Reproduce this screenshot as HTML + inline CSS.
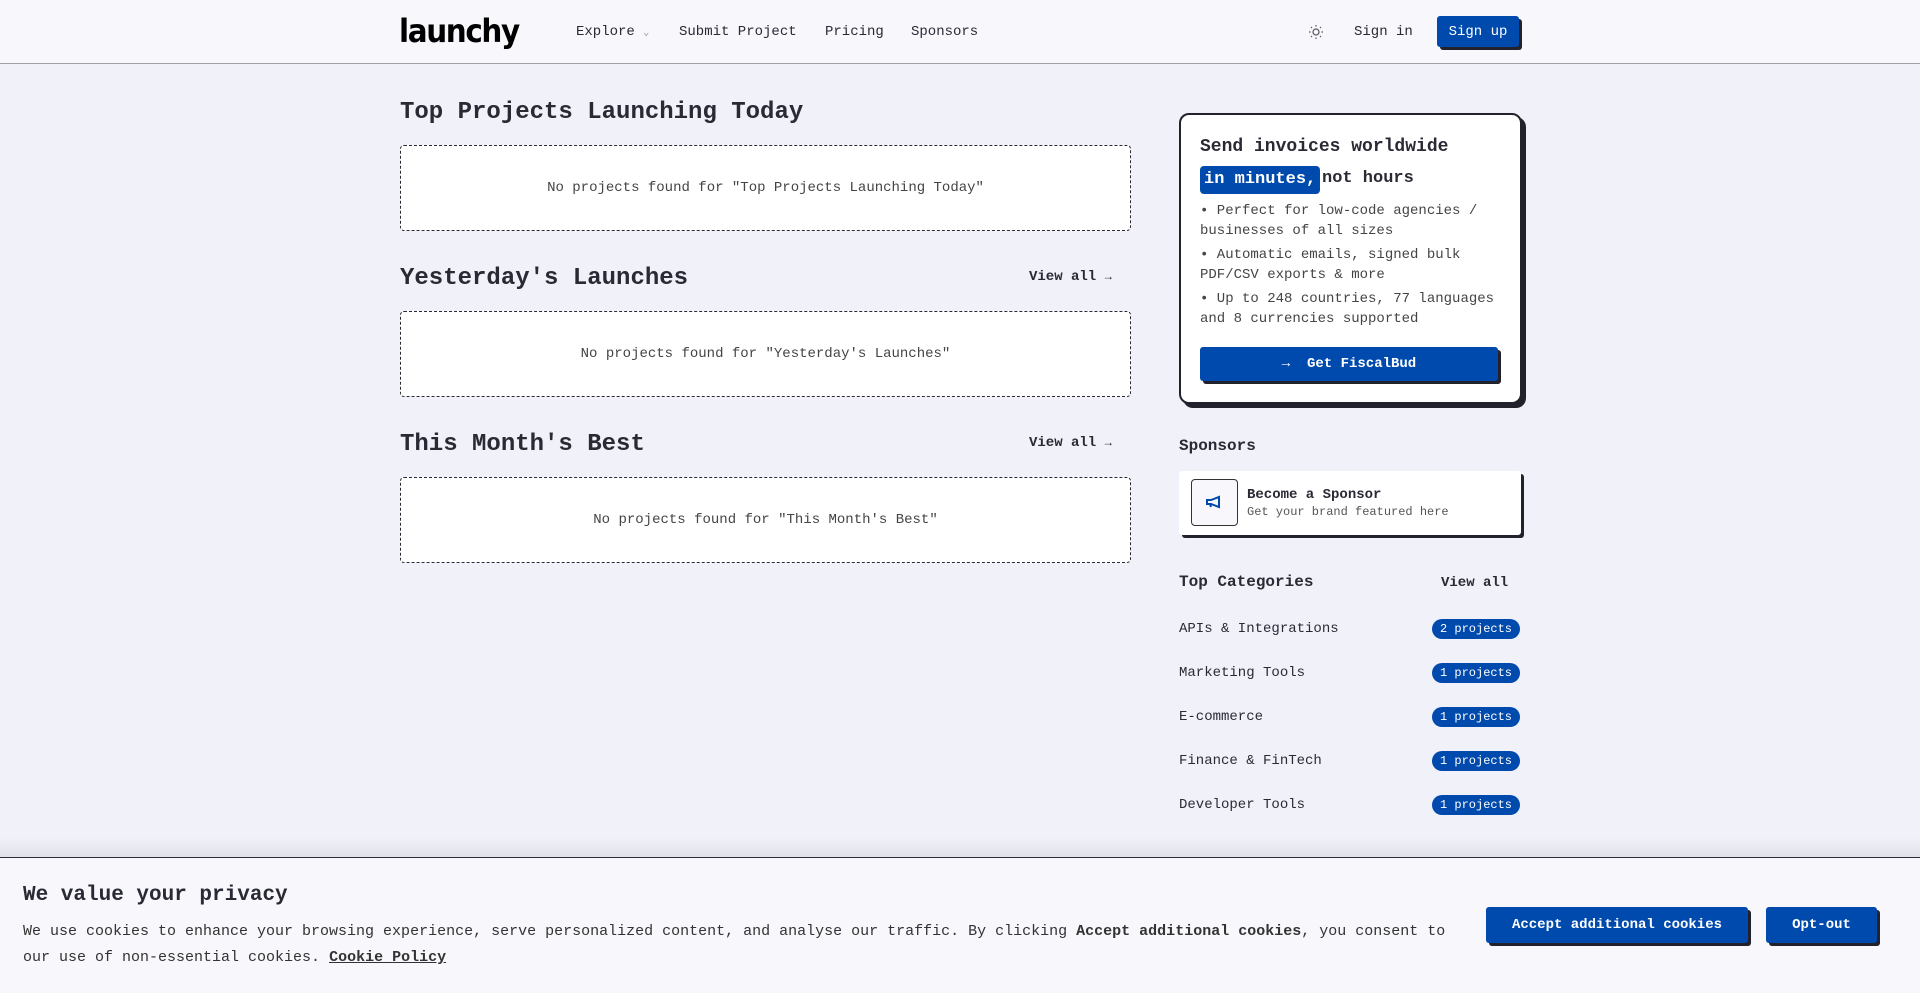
<!DOCTYPE html>
<html><head><meta charset="utf-8"><style>
*{box-sizing:border-box;margin:0;padding:0}
body{width:1920px;height:993px;overflow:hidden;background:#f0f1f9;font-family:"Liberation Mono",monospace;color:#2a2a35;position:relative}
.a{position:absolute;white-space:nowrap}
.hdr{position:absolute;left:0;top:0;width:1920px;height:64px;background:#f7f7fc;border-bottom:1px solid #a0a0a8}
.nav{font-size:14px;top:24px;color:#2a2a35}
h2{position:absolute;font-size:24px;font-weight:bold;left:400px;white-space:nowrap}
.box{position:absolute;left:400px;width:731px;height:86px;background:#fff;border:1px dashed #2a2a35;border-radius:4px;display:flex;align-items:center;justify-content:center;font-size:14px;color:#444}
.va{font-size:14px;font-weight:bold;left:1029px}
.btn{position:absolute;background:#004aad;color:#fff;font-weight:bold;border-radius:3px;box-shadow:3px 3px 0 #22222c;display:flex;align-items:center;justify-content:center}
.cat{left:1179px;font-size:14px;margin-top:1px}
.badge{position:absolute;left:1432px;width:88px;height:20px;border-radius:10px;background:#004aad;color:#fff;font-size:12px;display:flex;align-items:center;justify-content:center}
.bl{font-size:14px;left:1200px;color:#444;line-height:20px}
</style></head><body>
<div class="hdr"></div>
<div class="a" style="left:399px;top:12px;font-size:32px;font-weight:bold;letter-spacing:-1.5px;color:#000;font-family:'DejaVu Sans',sans-serif;transform:scaleX(0.92);transform-origin:left">launchy</div>
<div class="a nav" style="left:576px">Explore <span style="font-size:10px;color:#999">⌄</span></div>
<div class="a nav" style="left:679px">Submit Project</div>
<div class="a nav" style="left:825px">Pricing</div>
<div class="a nav" style="left:911px">Sponsors</div>
<svg class="a" style="left:1308px;top:24px" width="16" height="16" viewBox="0 0 16 16" fill="none" stroke="#555" stroke-width="1.2"><circle cx="8" cy="8" r="3"/><path d="M8 1v1.5M8 13.5V15M1 8h1.5M13.5 8H15M3 3l1 1M12 12l1 1M3 13l1-1M12 4l1-1"/></svg>
<div class="a nav" style="left:1354px">Sign in</div>
<div class="btn" style="left:1437px;top:16px;width:82px;height:31px;font-size:14px;font-weight:normal">Sign up</div>

<h2 style="top:99px">Top Projects Launching Today</h2>
<div class="box" style="top:145px">No projects found for "Top Projects Launching Today"</div>
<h2 style="top:265px">Yesterday's Launches</h2>
<div class="a va" style="top:269px">View all <span style="font-size:12px">→</span></div>
<div class="box" style="top:311px">No projects found for "Yesterday's Launches"</div>
<h2 style="top:431px">This Month's Best</h2>
<div class="a va" style="top:435px">View all <span style="font-size:12px">→</span></div>
<div class="box" style="top:477px">No projects found for "This Month's Best"</div>

<div class="a" style="left:1179px;top:113px;width:343px;height:291px;background:#fff;border:2px solid #22222c;border-radius:10px;box-shadow:4px 4px 0 #22222c"></div>
<div class="a" style="left:1200px;top:137px;font-size:18px;font-weight:bold">Send invoices worldwide</div>
<div class="a" style="left:1200px;top:166px;font-size:17px;font-weight:bold;background:#004aad;color:#fff;padding:0 4px;border-radius:4px;height:28px;line-height:28px">in minutes,</div>
<div class="a" style="left:1322px;top:169px;font-size:17px;font-weight:bold">not hours</div>
<div class="a bl" style="top:201px">•  Perfect for low-code agencies /<br>businesses of all sizes</div>
<div class="a bl" style="top:245px">•  Automatic emails, signed bulk<br>PDF/CSV exports &amp; more</div>
<div class="a bl" style="top:289px">•  Up to 248 countries, 77 languages<br>and 8 currencies supported</div>
<div class="btn" style="left:1200px;top:347px;width:298px;height:34px;font-size:14px">→&nbsp;&nbsp;Get FiscalBud</div>

<div class="a" style="left:1179px;top:437px;font-size:16px;font-weight:bold">Sponsors</div>
<div class="a" style="left:1179px;top:471px;width:342px;height:64px;background:#fff;border-radius:3px;box-shadow:3px 3px 0 #22222c"></div>
<div class="a" style="left:1191px;top:479px;width:47px;height:47px;border:1px solid #333;border-radius:4px;background:#f7f7fc"></div>
<svg class="a" style="left:1205px;top:495px" width="18" height="14" viewBox="0 0 18 14" fill="none" stroke="#004aad" stroke-width="2"><path d="M2 5h4l8-3v10l-8-3H2z"/><path d="M5 9l1 3"/></svg>
<div class="a" style="left:1247px;top:487px;font-size:14px;font-weight:bold">Become a Sponsor</div>
<div class="a" style="left:1247px;top:505px;font-size:12px;color:#555">Get your brand featured here</div>

<div class="a" style="left:1179px;top:573px;font-size:16px;font-weight:bold">Top Categories</div>
<div class="a" style="left:1441px;top:575px;font-size:14px;font-weight:bold">View all</div>
<div class="a cat" style="top:620px">APIs &amp; Integrations</div><div class="badge" style="top:619px">2 projects</div>
<div class="a cat" style="top:664px">Marketing Tools</div><div class="badge" style="top:663px">1 projects</div>
<div class="a cat" style="top:708px">E-commerce</div><div class="badge" style="top:707px">1 projects</div>
<div class="a cat" style="top:752px">Finance &amp; FinTech</div><div class="badge" style="top:751px">1 projects</div>
<div class="a cat" style="top:796px">Developer Tools</div><div class="badge" style="top:795px">1 projects</div>

<div class="a" style="left:0;top:837px;width:1920px;height:21px;background:linear-gradient(rgba(0,0,0,0),rgba(0,0,0,0.07))"></div>
<div class="a" style="left:0;top:857px;width:1920px;height:136px;background:#f7f7fc;border-top:1.5px solid #2a2a35"></div>
<div class="a" style="left:23px;top:884px;font-size:21px;font-weight:bold">We value your privacy</div>
<div class="a" style="left:23px;top:919px;font-size:15px;line-height:26px;color:#333">We use cookies to enhance your browsing experience, serve personalized content, and analyse our traffic. By clicking <b>Accept additional cookies</b>, you consent to<br>our use of non-essential cookies. <u style="font-weight:bold">Cookie Policy</u></div>
<div class="btn" style="left:1486px;top:907px;width:262px;height:36px;font-size:14px">Accept additional cookies</div>
<div class="btn" style="left:1766px;top:907px;width:111px;height:36px;font-size:14px">Opt-out</div>
</body></html>
